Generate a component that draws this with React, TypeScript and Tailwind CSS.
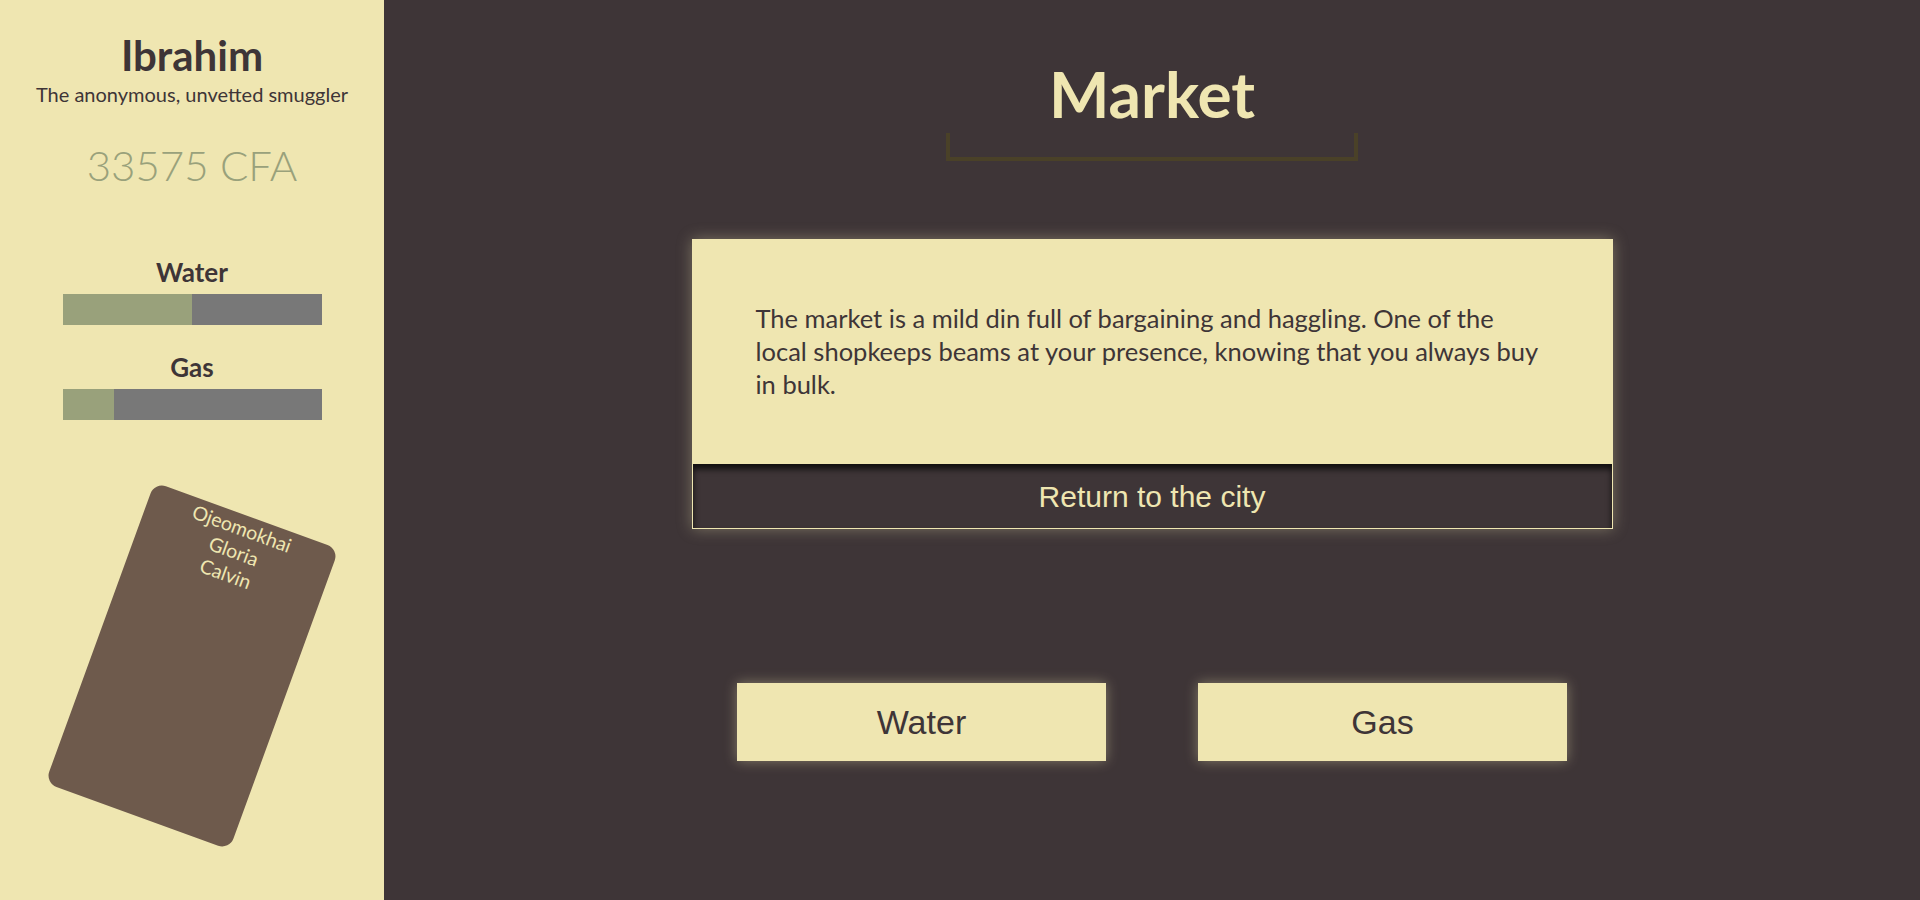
import React from "react";

const stats = [
  { name: "Water", level: 50 },
  { name: "Gas", level: 20 },
];

const crew = ["Ojeomokhai", "Gloria", "Calvin"];

function Sidebar() {
  return (
    <aside className="w-[384px] shrink-0 bg-[#efe6b1] flex flex-col items-center pt-[34px] font-['Lato',sans-serif] text-[#3e3537]">
      <h1 className="text-[42px] leading-none font-bold">Ibrahim</h1>
      <p className="mt-[8px] text-[20px] leading-none">The anonymous, unvetted smuggler</p>
      <div className="mt-[40px] text-[42px] leading-none font-light text-[#99a17b]">33575 CFA</div>

      {stats.map((s, i) => (
        <div key={s.name} className={i === 0 ? "mt-[73px] flex flex-col items-center" : "mt-[29px] flex flex-col items-center"}>
          <h2 className="text-[26px] leading-none font-bold">{s.name}</h2>
          <div className="mt-[9px] w-[259px] h-[31px] bg-[#787878]">
            <div className="h-full bg-[#99a17b]" style={{ width: `${s.level}%` }} />
          </div>
        </div>
      ))}

      {/* crew card */}
      <div className="mt-[86px] w-[196px] h-[320px] rounded-xl bg-[#6e5a4c] rotate-[20deg] pt-[2px] text-center text-[19.5px] leading-6 text-[#efe6b1]">
        {crew.map((c) => (
          <div key={c}>{c}</div>
        ))}
      </div>
    </aside>
  );
}

export default function App() {
  return (
    <div className="flex w-full h-[900px] overflow-hidden bg-[#3e3537]">
      <Sidebar />

      <main className="flex-1 flex flex-col items-center pt-[62px]">
        <h1 className="font-['Lato',sans-serif] text-[64px] leading-none font-bold text-[#efe6b1]">Market</h1>
        <div className="mt-[7px] w-[412px] h-[28px] border-x-4 border-b-4 border-[#4a4128]" />

        {/* event panel */}
        <section className="mt-[78px] w-[921px] shadow-[0_0_14px_rgba(239,230,177,0.35)]">
          <div className="h-[225px] bg-[#efe6b1] px-[64px] flex items-center">
            <p className="font-['Lato',sans-serif] text-[25.5px] leading-[33px] text-[#3e3537]">
              The market is a mild din full of bargaining and haggling. One of the local shopkeeps beams at your presence, knowing that you always buy in bulk.
            </p>
          </div>
          <button className="w-full h-[65px] bg-[#3e3537] border-x border-b border-[#efe6b1] shadow-[inset_0_5px_6px_rgba(0,0,0,0.75)] font-['Liberation_Sans',Arial,sans-serif] text-[30px] text-[#efe6b1]">
            Return to the city
          </button>
        </section>

        <div className="mt-[154px] flex gap-[92px]">
          {stats.map((s) => (
            <button
              key={s.name}
              className="w-[369px] h-[78px] bg-[#efe6b1] shadow-[0_0_12px_rgba(239,230,177,0.4)] font-['Liberation_Sans',Arial,sans-serif] text-[34px] text-[#3e3537]"
            >
              {s.name}
            </button>
          ))}
        </div>
      </main>
    </div>
  );
}
